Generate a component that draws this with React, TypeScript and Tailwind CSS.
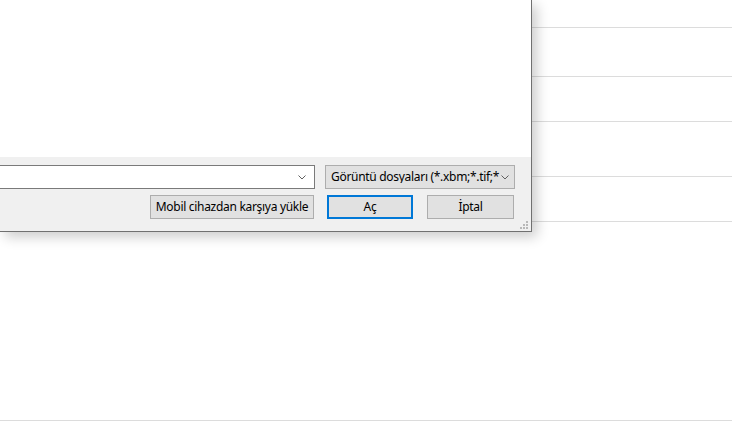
const rows = [28, 49, 45, 55, 45, 199];

function Chevron() {
  return (
    <svg width="8" height="5" viewBox="0 0 8 5" className="shrink-0">
      <path d="M0.5 0.5 L4 4 L7.5 0.5" fill="none" stroke="#606060" strokeWidth="1" />
    </svg>
  );
}

function Grip() {
  const dots = [
    [6, 0],
    [3, 3],
    [6, 3],
    [0, 6],
    [3, 6],
    [6, 6],
  ];
  return (
    <svg width="8" height="8" viewBox="0 0 8 8" className="absolute right-[3px] bottom-[2px]">
      {dots.map(([x, y], i) => (
        <rect key={i} x={x} y={y} width="2" height="2" fill="#b8b8b8" />
      ))}
    </svg>
  );
}

export default function App() {
  return (
    <div className="relative w-[732px] h-[429px] overflow-hidden bg-white font-['Noto_Sans','Open_Sans',sans-serif] text-[12px] tracking-[-0.3px] text-black">
      {/* page rows behind the dialog */}
      <div className="flex flex-col">
        {rows.map((h, i) => (
          <div key={i} className="border-b border-[#dcdcdc]" style={{ height: h }} />
        ))}
      </div>

      {/* file dialog */}
      <div className="absolute left-0 top-0 w-[532px] h-[232px] flex flex-col bg-white border-r border-b border-[#707070] shadow-[5px_5px_12px_rgba(0,0,0,0.2)]">
        <div className="h-[157px] bg-white" />
        <div className="relative flex-1 bg-[#f0f0f0] flex flex-col">
          <div className="mt-[8px] flex items-center h-[24px] pr-[16px]">
            <div className="w-[315px] h-full bg-white border border-l-0 border-[#7a7a7a] flex items-center justify-end pr-[8px]">
              <Chevron />
            </div>
            <div className="ml-[10px] w-[190px] h-full bg-[#e1e1e1] border border-[#adadad] flex items-center pl-[5px] pr-[5px]">
              <span className="w-[169px] overflow-hidden whitespace-nowrap leading-none">
                Görüntü dosyaları (*.xbm;*.tif;*&nbsp;.pjp;*.svgz)
              </span>
              <span className="flex-1" />
              <Chevron />
            </div>
          </div>
          <div className="mt-[6px] flex justify-end h-[24px] pr-[17px]">
            <button className="w-[164px] h-full bg-[#e1e1e1] border border-[#adadad] whitespace-nowrap leading-none">
              Mobil cihazdan karşıya yükle
            </button>
            <button className="ml-[13px] w-[86px] h-full bg-[#e1e1e1] border-2 border-[#0078d7] leading-none">
              Aç
            </button>
            <button className="ml-[14px] w-[87px] h-full bg-[#e1e1e1] border border-[#adadad] leading-none">
              İptal
            </button>
          </div>
          <Grip />
        </div>
      </div>
    </div>
  );
}
